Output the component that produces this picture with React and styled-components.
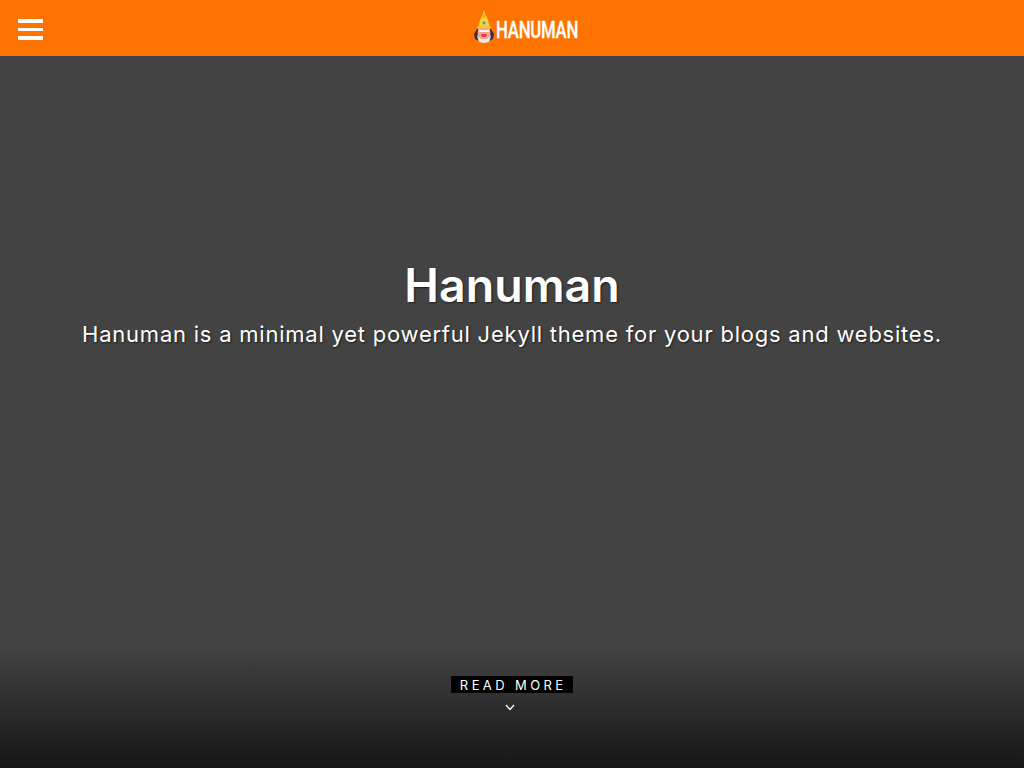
import React from "react";
import styled, { createGlobalStyle } from "styled-components";

const Global = createGlobalStyle`
  html, body { margin: 0; padding: 0; background: #434343; overflow: hidden; }
  * { box-sizing: border-box; }
`;

const Page = styled.div`
  width: 1024px;
  height: 768px;
  display: flex;
  flex-direction: column;
  font-family: Inter, "Liberation Sans", sans-serif;
  color: #fff;
`;

const Header = styled.header`
  height: 56px;
  flex: none;
  background: #ff7300;
  display: grid;
  grid-template-columns: 1fr auto 1fr;
  align-items: center;
  padding: 0 18px;
`;

const Burger = styled.div`
  width: 25px;
  display: flex;
  flex-direction: column;
  gap: 5px;
  margin-top: 3px;
  span { display: block; height: 3.4px; background: #fff; }
`;

const Logo = styled.div`
  display: flex;
  align-items: center;
  transform: translateX(14px);
`;

const LogoSvg = styled.svg`
  display: block;
  margin-top: -3px;
  flex: none;
`;

const LogoText = styled.span`
  font-family: "Roboto", "Liberation Sans", sans-serif;
  font-size: 24px;
  font-weight: 500;
  letter-spacing: -0.4px;
  transform: scaleX(0.7);
  transform-origin: left center;
  width: 83px;
  margin-left: 2px;
  margin-top: 4px;
  white-space: nowrap;
  -webkit-text-stroke: 0.3px #fff;
`;

const Hero = styled.main`
  flex: 1;
  position: relative;
  display: flex;
  flex-direction: column;
  align-items: center;
  padding-top: 200px;
  background: linear-gradient(to bottom, #434343 0, #434343 590px, #161616 712px);
`;

const Title = styled.h1`
  margin: 0;
  font-size: 46.5px;
  line-height: 58px;
  font-weight: 600;
  text-shadow: 1px 1px 2px rgba(0, 0, 0, 0.6);
`;

const Tagline = styled.p`
  margin: 5px 0 0;
  font-size: 22px;
  line-height: 30px;
  font-weight: 400;
  letter-spacing: 0.77px;
  text-shadow: 1px 1px 2px rgba(0, 0, 0, 0.6);
`;

const More = styled.div`
  margin-top: 327px;
  display: flex;
  flex-direction: column;
  align-items: center;
  gap: 11px;
`;

const MoreLabel = styled.span`
  background: #000;
  font-size: 13px;
  line-height: 16px;
  letter-spacing: 3.4px;
  padding: 1px 6px 0 8.4px;
`;

const ChevronWrap = styled.span`
  display: block;
  margin-right: 3px;
`;

const LogoMark = () => (
  <LogoSvg width="20" height="33" viewBox="0 0 20 33">
    <path d="M10 0 L11.5 5 L14 10 L15.5 16 H4.5 L6 10 L8.5 5 Z" fill="#f7d338" />
    <path d="M10 2 L11 8 H9 Z" fill="#f09a24" />
    <circle cx="10" cy="13" r="1.4" fill="#2a9fd6" />
    <path d="M4 16 H16 L17 18 H3 Z" fill="#f6c82e" />
    <path d="M3 19 L0 24 L1 29 L5 31 V19 Z" fill="#33323f" />
    <path d="M17 19 L20 24 L19 29 L15 31 V19 Z" fill="#33323f" />
    <path d="M4 18 H16 L16.5 27 L14 31 H6 L3.5 27 Z" fill="#f4a78f" />
    <path d="M5 20 H15 V22 H5 Z" fill="#f7f1e6" />
    <path d="M7 24 H13 L12 27 H8 Z" fill="#e23a50" />
    <path d="M3 26 L7 29 H13 L17 26 L15 32 L10 33 L5 32 Z" fill="#e9e9ec" />
  </LogoSvg>
);

const Chevron = () => (
  <svg width="10" height="7" viewBox="0 0 10 7" style={{ display: "block" }}>
    <path d="M1 1 L5 5.5 L9 1" fill="none" stroke="#fff" strokeWidth="1.3" />
  </svg>
);

export default function App() {
  return (
    <>
      <Global />
      <Page>
        <Header>
          <Burger><span /><span /><span /></Burger>
          <Logo>
            <LogoMark />
            <LogoText>HANUMAN</LogoText>
          </Logo>
          <div />
        </Header>
        <Hero>
          <Title>Hanuman</Title>
          <Tagline>Hanuman is a minimal yet powerful Jekyll theme for your blogs and websites.</Tagline>
          <More>
            <MoreLabel>READ MORE</MoreLabel>
            <ChevronWrap><Chevron /></ChevronWrap>
          </More>
        </Hero>
      </Page>
    </>
  );
}
